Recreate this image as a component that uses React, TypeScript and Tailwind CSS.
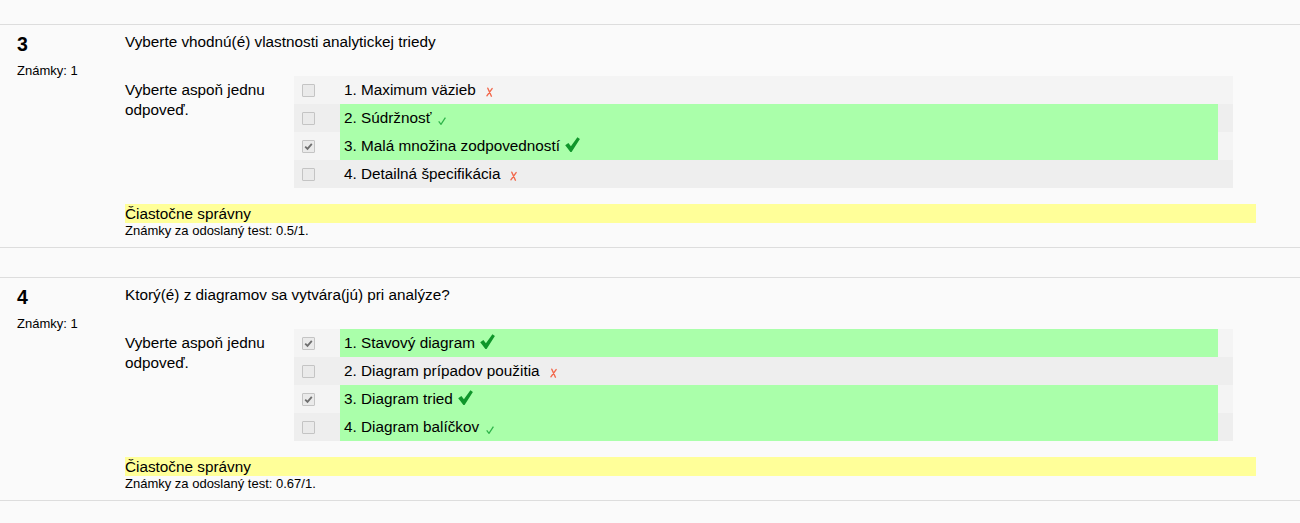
type Answer = {
    label: string;
    checked: boolean;
    correct: boolean;
    mark: "big" | "small" | "x";
};

type Question = {
    num: number;
    title: string;
    answers: Answer[];
    grade: string;
};

const questions: Question[] = [
    {
        num: 3,
        title: "Vyberte vhodnú(é) vlastnosti analytickej triedy",
        answers: [
            { label: "1. Maximum väzieb", checked: false, correct: false, mark: "x" },
            { label: "2. Súdržnosť", checked: false, correct: true, mark: "small" },
            { label: "3. Malá množina zodpovedností", checked: true, correct: true, mark: "big" },
            { label: "4. Detailná špecifikácia", checked: false, correct: false, mark: "x" },
        ],
        grade: "0.5/1.",
    },
    {
        num: 4,
        title: "Ktorý(é) z diagramov sa vytvára(jú) pri analýze?",
        answers: [
            { label: "1. Stavový diagram", checked: true, correct: true, mark: "big" },
            { label: "2. Diagram prípadov použitia", checked: false, correct: false, mark: "x" },
            { label: "3. Diagram tried", checked: true, correct: true, mark: "big" },
            { label: "4. Diagram balíčkov", checked: false, correct: true, mark: "small" },
        ],
        grade: "0.67/1.",
    },
];

const BigCheck = () => (
    <svg width="15" height="15" viewBox="0 0 15 15" className="inline-block align-[-1px] ml-[5px]">
        <path d="M0.2 8.3 L3.4 6.1 L5.9 9.2 L12.4 0.2 L14.9 2.1 L6.6 14.9 L5.4 14.9 Z" fill="#10962b" />
    </svg>
);

const SmallCheck = () => (
    <svg width="8" height="8" viewBox="0 0 8 8" className="inline-block align-[-2px] ml-[7px]">
        <path d="M0.7 4.4 L3 7.3 L7.4 0.6" fill="none" stroke="#2fb44a" strokeWidth="1.3" />
    </svg>
);

const RedX = () => (
    <svg width="7" height="10" viewBox="0 0 7 10" className="inline-block align-[-2px] ml-[10px]">
        <path d="M1.8 1.2 L5.4 9.2 M6.1 1.6 L0.9 8.8" fill="none" stroke="#f2694d" strokeWidth="1.4" strokeLinecap="round" />
    </svg>
);

const Checkbox = ({ checked }: { checked: boolean }) => (
    <span className="flex items-center justify-center w-[13px] h-[13px] border border-[#c4c4c4] bg-[#eaeaea] rounded-[1px]">
        {checked && (
            <svg width="9" height="9" viewBox="0 0 9 9">
                <path d="M1.2 4.6 L3.5 6.9 L7.8 1.8" fill="none" stroke="#6f6f6f" strokeWidth="1.8" />
            </svg>
        )}
    </span>
);

const AnswerRow = ({ answer, index }: { answer: Answer; index: number }) => {
    const rowBg = index % 2 === 0 ? "bg-[#f4f4f4]" : "bg-[#eeeeee]";
    return (
        <div className={`flex h-[28px] ${rowBg}`}>
            <div className="w-[46px] shrink-0 pl-[8px] flex items-center">
                <Checkbox checked={answer.checked} />
            </div>
            <div className={`w-[878px] shrink-0 pl-[4px] flex items-center ${answer.correct ? "bg-[#aaffaa]" : ""}`}>
                <span className="leading-[20px] whitespace-nowrap">
                    {answer.label}
                    {answer.mark === "big" && <BigCheck />}
                    {answer.mark === "small" && <SmallCheck />}
                    {answer.mark === "x" && <RedX />}
                </span>
            </div>
        </div>
    );
};

const QuestionBlock = ({ q }: { q: Question }) => (
    <div className="flex border-y border-[#dddddd]">
        <div className="w-[125px] shrink-0 pl-[17px] pt-[7px]">
            <div className="text-[19.5px] leading-[24px] font-bold">{q.num}</div>
            <div className="mt-[7px] text-[13px] leading-[16px]">Známky: 1</div>
        </div>
        <div className="pt-[7px] pb-[8px] text-[15.3px]">
            <div className="leading-[20px]">{q.title}</div>
            <div className="mt-[24px] flex">
                <div className="w-[169px] shrink-0 pt-[4px] leading-[20px]">Vyberte aspoň jednu odpoveď.</div>
                <div className="w-[939px]">
                    {q.answers.map((a, i) => (
                        <AnswerRow key={i} answer={a} index={i} />
                    ))}
                </div>
            </div>
            <div className="mt-[16px] w-[1131px] h-[19px] bg-[#ffff99] leading-[19px]">Čiastočne správny</div>
            <div className="text-[13px] leading-[16px]">Známky za odoslaný test: {q.grade}</div>
        </div>
    </div>
);

export default function App() {
    return (
        <div className="min-h-screen bg-[#fafafa] text-black pt-[24px] font-['Liberation_Sans',Arial,sans-serif]">
            <div className="flex flex-col gap-[29px]">
                {questions.map((q) => (
                    <QuestionBlock key={q.num} q={q} />
                ))}
            </div>
        </div>
    );
}
